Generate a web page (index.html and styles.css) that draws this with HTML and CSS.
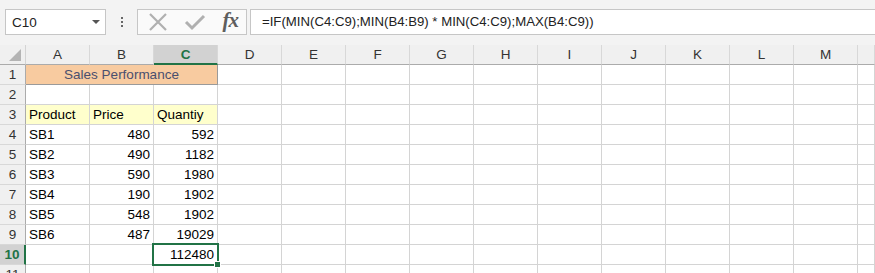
FILE: index.html
```html
<!DOCTYPE html>
<html lang="en">
<head>
<meta charset="UTF-8">
<meta name="viewport" content="width=device-width, initial-scale=1.0">
<title>Sales Performance</title>
<link rel="stylesheet" href="styles.css">
</head>
<body>
<div class="toolbar">
  <div class="namebox">
    <span>C10</span>
    <span class="arrow"></span>
  </div>
  <div class="dots"><i></i><i></i><i></i></div>
  <div class="fbuttons">
    <svg width="20" height="20" viewBox="0 0 20 20"><path d="M2 2 L18 18 M18 2 L2 18" stroke="#b0b0b0" stroke-width="2.2" fill="none"/></svg>
    <svg width="22" height="20" viewBox="0 0 22 20"><path d="M2 10 L8 16 L20 4" stroke="#b0b0b0" stroke-width="3" fill="none"/></svg>
    <span class="fx">fx</span>
  </div>
  <div class="formula">=IF(MIN(C4:C9);MIN(B4:B9) * MIN(C4:C9);MAX(B4:C9))</div>
</div>

<div class="sheet">
  <div class="corner"><span class="tri"></span></div>
  <div class="colhead">A</div>
  <div class="colhead">B</div>
  <div class="colhead sel">C</div>
  <div class="colhead">D</div>
  <div class="colhead">E</div>
  <div class="colhead">F</div>
  <div class="colhead">G</div>
  <div class="colhead">H</div>
  <div class="colhead">I</div>
  <div class="colhead">J</div>
  <div class="colhead">K</div>
  <div class="colhead">L</div>
  <div class="colhead">M</div>
  <div class="colhead"></div>
</div>

<script>
  const rows = [
    ['', '', ''],
    ['', '', ''],
    ['Product', 'Price', 'Quantiy'],
    ['SB1', '480', '592'],
    ['SB2', '490', '1182'],
    ['SB3', '590', '1980'],
    ['SB4', '190', '1902'],
    ['SB5', '548', '1902'],
    ['SB6', '487', '19029'],
    ['', '', '112480'],
    ['', '', '']
  ];
  const sheet = document.querySelector('.sheet');
  rows.forEach(function (row, i) {
    const n = i + 1;
    let html = '<div class="rowhead' + (n === 10 ? ' sel' : '') + '">' + n + '</div>';
    if (n === 1) {
      html += '<div class="cell title">Sales Performance</div>';
    } else {
      row.forEach(function (val, j) {
        let cls = 'cell';
        if (n === 3) cls += ' head';
        if (j > 0 && n > 3) cls += ' num';
        if (n === 10 && j === 2) cls += ' active';
        html += '<div class="' + cls + '">' + val + '</div>';
      });
    }
    for (let k = 0; k < 11; k++) html += '<div class="cell"></div>';
    sheet.insertAdjacentHTML('beforeend', html);
  });
</script>
</body>
</html>
```

FILE: styles.css
```css
body {
  margin: 0;
  background: #f3f3f3;
  font-family: "Liberation Sans", Arial, sans-serif;
  overflow: hidden;
}
.toolbar {
  height: 45px;
  display: flex;
  align-items: flex-start;
  padding-top: 9px;
  box-sizing: border-box;
}
.namebox {
  width: 101px;
  height: 26px;
  margin-left: 5px;
  box-sizing: border-box;
  border: 1px solid #c6c6c6;
  background: #fff;
  display: flex;
  align-items: center;
  justify-content: space-between;
  padding: 0 5px 0 6px;
  font-size: 13.5px;
  color: #222;
}
.arrow {
  width: 0;
  height: 0;
  border-left: 4px solid transparent;
  border-right: 4px solid transparent;
  border-top: 4px solid #555;
}
.dots {
  width: 31px;
  height: 26px;
  display: flex;
  flex-direction: column;
  align-items: center;
  justify-content: center;
  gap: 2px;
}
.dots i {
  width: 2px;
  height: 2px;
  background: #666;
}
.fbuttons {
  width: 110px;
  height: 26px;
  box-sizing: border-box;
  border: 1px solid #c6c6c6;
  background: #fafafa;
  display: flex;
  align-items: center;
  justify-content: space-between;
  padding: 0 8px 0 10px;
}
.fx {
  font-family: "Liberation Serif", serif;
  font-style: italic;
  font-weight: bold;
  font-size: 21px;
  letter-spacing: -1px;
  color: #5e5e5e;
  margin-bottom: 3px;
}
.formula {
  flex: 1;
  height: 26px;
  margin-left: 3px;
  box-sizing: border-box;
  border: 1px solid #c6c6c6;
  border-right: none;
  background: #fff;
  font-size: 13.2px;
  line-height: 24px;
  padding-left: 11px;
  color: #222;
}
.sheet {
  display: grid;
  grid-template-columns: 26px repeat(13, 64px) 1fr;
  grid-template-rows: 20px;
  grid-auto-rows: 20px;
  background: #fff;
  font-size: 13.5px;
  color: #000;
}
.sheet > div {
  box-sizing: border-box;
  border-right: 1px solid #d4d4d4;
  border-bottom: 1px solid #d4d4d4;
}
.corner {
  background: #f0f0f0;
  position: relative;
  border-bottom-color: #ababab !important;
}
.tri {
  position: absolute;
  right: 4px;
  bottom: 3px;
  width: 0;
  height: 0;
  border-left: 12px solid transparent;
  border-bottom: 12px solid #b4b4b4;
}
.colhead {
  background: #f0f0f0;
  text-align: center;
  line-height: 20px;
  color: #333;
  border-right-color: #d8d8d8 !important;
  border-bottom-color: #ababab !important;
}
.colhead.sel {
  background: #d2d2d2;
  color: #217346;
  font-weight: bold;
  border-bottom: 2px solid #217346 !important;
}
.rowhead {
  background: #f0f0f0;
  text-align: center;
  line-height: 20px;
  color: #333;
  border-right-color: #ababab !important;
  border-bottom-color: #d8d8d8 !important;
}
.rowhead.sel {
  background: #d2d2d2;
  color: #217346;
  font-weight: bold;
  border-right: 2px solid #217346 !important;
}
.cell {
  line-height: 20px;
  padding: 0 3px;
  white-space: nowrap;
  overflow: hidden;
}
.cell.num {
  text-align: right;
}
.cell.head {
  background: #ffffcc;
}
.cell.title {
  grid-column: span 3;
  background: #f8cba0;
  color: #4a4f6e;
  text-align: center;
  border: 1px solid #9a9a9a !important;
  border-top: none !important;
  border-left: none !important;
}
.cell.active {
  position: relative;
  overflow: visible;
}
.cell.active::after {
  content: "";
  position: absolute;
  left: -2px;
  top: -2px;
  right: -2px;
  bottom: -2px;
  border: 2px solid #217346;
}
.cell.active::before {
  content: "";
  position: absolute;
  right: -4px;
  bottom: -4px;
  width: 5px;
  height: 5px;
  background: #217346;
  border: 1px solid #fff;
  z-index: 1;
}
```
